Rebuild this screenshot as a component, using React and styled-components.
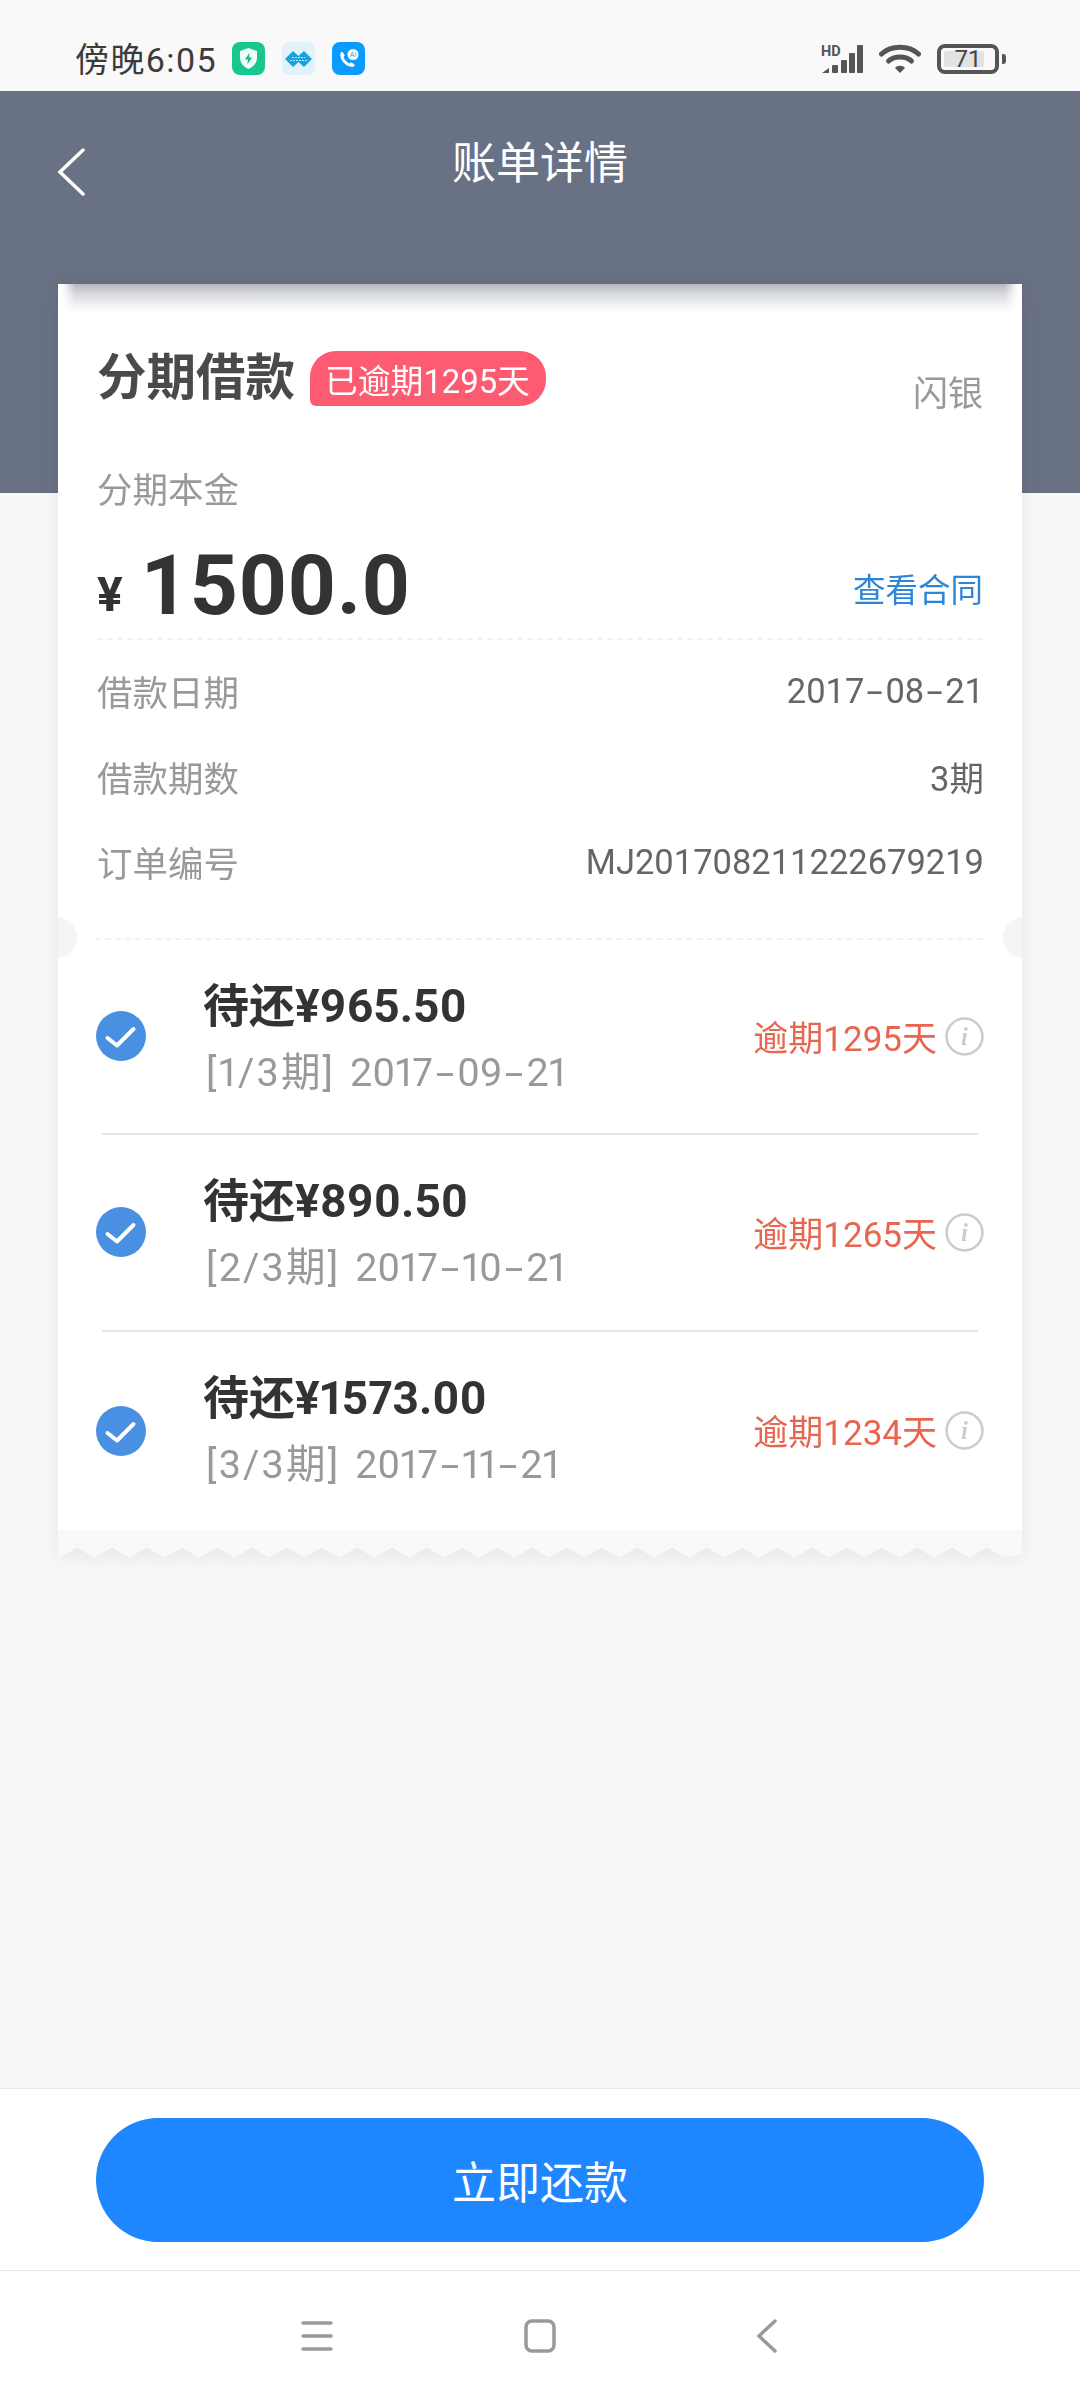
import React from "react"
import styled, { createGlobalStyle } from "styled-components"

const GlobalStyle = createGlobalStyle`
  html, body {
    margin: 0;
    padding: 0;
    background: #f8f8f8;
  }
  * {
    box-sizing: border-box;
  }
`

const Page = styled.div`
  width: 1080px;
  height: 2400px;
  display: flex;
  flex-direction: column;
  background: #f8f8f8;
  font-family: Roboto, "Noto Sans CJK SC", sans-serif;
  overflow: hidden;
`

// Status bar
const StatusBar = styled.div`
  height: 91px;
  flex: none;
  display: flex;
  align-items: center;
  padding: 26px 74px 0 75px;
  background: #f9f9f9;
`

const Clock = styled.span`
  font-size: 34px;
  line-height: 40px;
  letter-spacing: 1.4px;
  color: #3c3c3c;
  margin: 2px 15px 0 0;
`

const AppIcons = styled.div`
  display: flex;
  gap: 17px;
  flex: 1;
`

const StatusIcons = styled.div`
  display: flex;
  align-items: center;
  gap: 16px;
`

const BatteryBox = styled.div`
  position: relative;
  width: 62px;
  height: 30px;
  border: 4px solid #555;
  border-radius: 8px;
  display: flex;
  align-items: center;
  justify-content: center;
`

const BatteryFill = styled.div`
  position: absolute;
  left: 3px;
  top: 3px;
  bottom: 3px;
  border-radius: 2px;
  background: #e2e2e2;
`

const BatteryText = styled.span`
  position: relative;
  font-size: 24px;
  line-height: 22px;
  color: #444;
`

const BatteryCap = styled.div`
  width: 4px;
  height: 10px;
  margin-left: -13px;
  border-radius: 0 3px 3px 0;
  background: #555;
`

// Dark header
const Band = styled.header`
  height: 402px;
  flex: none;
  background: #697184;
  display: flex;
  align-items: flex-start;
  padding-top: 49px;
`

const BackButton = styled.div`
  width: 30px;
  height: 48px;
  margin: 8px 0 0 57px;
`

const HeaderTitle = styled.h1`
  margin: 0 0 0 -87px;
  flex: 1;
  font-size: 44px;
  line-height: 48px;
  font-weight: 400;
  text-align: center;
  color: #fff;
`

const Content = styled.main`
  flex: 1;
  padding: 0 58px;
  margin-top: -209px;
`

// Receipt card
const Card = styled.section`
  position: relative;
  filter: drop-shadow(0 4px 10px rgba(0, 0, 0, 0.07));
`

const Sheet = styled.div`
  background: #fff;
`

const TopShade = styled.div`
  position: absolute;
  left: 4px;
  right: 4px;
  top: 0;
  height: 30px;
  background: linear-gradient(to bottom, #b4b7c1 0%, #dadbe0 35%, #f5f5f6 75%, #fff 100%);
  mask-image: linear-gradient(to right, transparent 0, #000 14px, #000 calc(100% - 14px), transparent 100%);
`

const Summary = styled.div`
  padding: 64px 39px 0 39px;
`

const TitleRow = styled.div`
  display: flex;
  height: 60px;
  align-items: center;
`

const LoanTitle = styled.h2`
  margin: 0 15px 0 0;
  font-size: 49.5px;
  line-height: 60px;
  font-weight: 700;
  color: #4a4a4a;
`

const OverdueBadge = styled.span`
  height: 55px;
  padding: 0 16px 0 15px;
  display: flex;
  align-items: center;
  border-radius: 26px 26px 26px 6px;
  background: #fd5b72;
  font-size: 32.8px;
  color: #fff;
`

const Source = styled.span`
  margin-left: auto;
  margin-top: 33px;
  font-size: 35px;
  line-height: 46px;
  color: #999;
`

const PrincipalLabel = styled.div`
  margin-top: 58px;
  font-size: 35.5px;
  line-height: 50px;
  color: #999;
`

const AmountRow = styled.div`
  margin-top: 25px;
  height: 99px;
  padding-bottom: 9px;
  display: flex;
  align-items: center;
  border-bottom: 2px dashed #f1f1f1;
`

const Yen = styled.span`
  font-size: 48px;
  font-weight: 700;
  color: #333;
  margin: 18px 18px 0 0;
`

const Amount = styled.span`
  font-size: 84px;
  line-height: 90px;
  font-weight: 700;
  letter-spacing: 0.8px;
  color: #333;
  margin-top: 2px;
`

const ContractLink = styled.a`
  margin-left: auto;
  margin-top: 4px;
  font-size: 32.5px;
  color: #2e86d6;
`

const DetailList = styled.div`
  padding: 8px 38px 33px 39px;
`

const DetailRow = styled.div`
  height: 85.5px;
  display: flex;
  align-items: center;
  justify-content: space-between;
`

const DetailLabel = styled.span`
  font-size: 35.5px;
  color: #999;
`

const DetailValue = styled.span`
  font-size: 34.5px;
  color: #666;
`

// the hyphen in the dates is drawn wider than Roboto's
const Dash = styled.span`
  display: inline-block;
  width: 0.61em;
  text-align: center;
  transform: scaleX(1.7);
`

const DashedLine = styled.div`
  margin: 0 39px 0 37px;
  border-top: 2px dashed #f1f1f1;
`

const Notch = styled.div`
  position: absolute;
  top: 633px;
  width: 41px;
  height: 41px;
  border-radius: 50%;
  background: #f5f5f5;
  ${props =>
    props.$side === "left"
      ? "left: -22px; clip-path: inset(0 0 0 22px);"
      : "right: -22px; clip-path: inset(0 22px 0 0);"}
`

const Installment = styled.div`
  height: ${props => props.$height}px;
  display: flex;
  align-items: center;
  padding: 0 38px 0 38px;
`

const CheckBadge = styled.div`
  width: 50px;
  height: 50px;
  flex: none;
  margin-right: 57px;
`

const InstallmentText = styled.div`
  flex: 1;
  padding-top: ${props => props.$top}px;
`

const InstallmentTitle = styled.div`
  font-size: 46px;
  line-height: 67px;
  font-weight: 700;
  font-variant-numeric: proportional-nums;
  color: #333;
  position: relative;
  top: 1px;
`

const InstallmentDate = styled.div`
  font-size: 39.5px;
  line-height: 67px;
  word-spacing: 5px;
  font-variant-numeric: proportional-nums;
  color: #999;
  padding-left: 3px;
`

const Period = styled.span`
  letter-spacing: 2.2px;
`

const LateText = styled.span`
  font-size: 35px;
  color: #e8654f;
  margin: -2px 8px 0 0;
`

const InfoIcon = styled.div`
  width: 39px;
  height: 39px;
  flex: none;
`

const Divider = styled.div`
  height: 2px;
  margin: 0 44px;
  background: #e6e6e6;
`

const Tear = styled.svg`
  display: block;
  width: 964px;
  height: 28px;
`

// Footer
const ActionBar = styled.div`
  height: 182px;
  flex: none;
  padding: 29px 96px 0;
  background: #fff;
  border-top: 1px solid #e8e8e8;
`

const PayButton = styled.button`
  display: block;
  width: 100%;
  height: 124px;
  border: none;
  border-radius: 62px;
  background: #1e87ff;
  color: #fff;
  font-family: inherit;
  font-size: 44px;
`

const NavBar = styled.nav`
  height: 130px;
  flex: none;
  display: flex;
  justify-content: center;
  align-items: center;
  gap: 183px;
  background: #fff;
  border-top: 1px solid #e8e8e8;
`

const installments = [
  { title: "待还¥965.50", period: "[1/3期]", date: "2017-09-21", late: "逾期1295天", height: 193, top: 5 },
  { title: "待还¥890.50", period: "[2/3期]", date: "2017-10-21", late: "逾期1265天", height: 195, top: 3 },
  { title: "待还¥1573.00", period: "[3/3期]", date: "2017-11-21", late: "逾期1234天", height: 198, top: 0 },
]

const details = [
  ["借款日期", "2017-08-21"],
  ["借款期数", "3期"],
  ["订单编号", "MJ201708211222679219"],
]

function withDashes(text) {
  return text.split("-").map((part, i) => (
    <React.Fragment key={i}>
      {i > 0 && <Dash>-</Dash>}
      {part}
    </React.Fragment>
  ))
}

// zigzag edge at the bottom of the receipt, one tooth every 35px
function tearPath() {
  let d = "M0 0 L964 0 L964 24"
  for (let x = 954; x > 0; x -= 35) {
    d += ` L${x - 8} 27 L${x - 25} 17`
  }
  return d + " L0 22 Z"
}

function ShieldIcon() {
  return (
    <svg width="33" height="33" viewBox="0 0 33 33">
      <rect width="33" height="33" rx="8" fill="#17c78f" />
      <path d="M16.5 6 L25 9 V16 C25 21 21 25 16.5 27 C12 25 8 21 8 16 V9 Z" fill="#f2fdf9" />
      <path d="M17.5 10.5 L13 17.5 H16 L15.3 22.5 L20 15.5 H17 Z" fill="#17b784" />
    </svg>
  )
}

function DiamondIcon() {
  return (
    <svg width="33" height="33" viewBox="0 0 33 33">
      <rect width="33" height="33" rx="8" fill="#e1f2fa" />
      <path d="M3 17 L11 9 L16.5 14 L22 9 L30 17 L22 25 L16.5 20 L11 25 Z" fill="#16a3dc" />
      <path d="M10 15.5 H23 M8 18.5 H25" stroke="#bfe8f8" strokeWidth="1" strokeDasharray="2 1" />
    </svg>
  )
}

function CallIcon() {
  return (
    <svg width="33" height="33" viewBox="0 0 33 33">
      <rect width="33" height="33" rx="8" fill="#0a9bff" />
      <path
        d="M8.5 11 C9 10 10.5 9.5 11 10.5 L12.5 13 C12.8 13.8 12 14.5 11.5 15 C12.5 18 14.5 20 17.5 21.5 C18 21 18.8 20.2 19.6 20.5 L22 22 C23 22.8 22.5 24 21.5 24.8 C15 26 7 18 8.5 11 Z"
        fill="#fff"
      />
      <circle cx="21" cy="12.5" r="5.5" fill="#fff" />
      <text x="21" y="15" textAnchor="middle" fontSize="7" fontFamily="Roboto, sans-serif" fill="#0a9bff">
        AI
      </text>
    </svg>
  )
}

function SignalIcon() {
  return (
    <svg width="42" height="30" viewBox="0 0 42 30">
      <text x="0" y="12" fontSize="14.5" fontWeight="700" fontFamily="Roboto, sans-serif" fill="#555">
        HD
      </text>
      <path d="M1 29 L8 24 V29 Z" fill="#555" />
      <rect x="11" y="21" width="6" height="8" rx="1" fill="#555" />
      <rect x="20" y="16" width="6" height="13" rx="1" fill="#555" />
      <rect x="28" y="9" width="6" height="20" rx="1" fill="#555" />
      <rect x="36" y="1" width="6" height="28" rx="1" fill="#555" />
    </svg>
  )
}

function WifiIcon() {
  return (
    <svg width="42" height="30" viewBox="0 0 42 30" fill="none" stroke="#555" strokeWidth="5" strokeLinecap="round">
      <path d="M2.5 10 C12 1 30 1 39.5 10" />
      <path d="M9.5 17 C15 11.5 27 11.5 32.5 17" />
      <path d="M16 24 L21 29 L26 24 C24 21 18 21 16 24 Z" fill="#555" stroke="none" />
    </svg>
  )
}

function BackChevron() {
  return (
    <svg width="30" height="48" viewBox="0 0 30 48" fill="none" stroke="#fff" strokeWidth="3.5" strokeLinecap="round">
      <path d="M26 2 L3 24 L26 46" />
    </svg>
  )
}

function CheckIcon() {
  return (
    <svg width="50" height="50" viewBox="0 0 50 50">
      <circle cx="25" cy="25" r="25" fill="#4a90e2" />
      <path d="M11.5 27 L21 34.5 L37.5 18" fill="none" stroke="#fff" strokeWidth="4" strokeLinecap="round" strokeLinejoin="round" />
    </svg>
  )
}

function InfoGlyph() {
  return (
    <svg width="39" height="39" viewBox="0 0 38 38">
      <circle cx="19" cy="19" r="17.5" fill="none" stroke="#ccc" strokeWidth="2.5" />
      <text x="19" y="27" textAnchor="middle" fontSize="24" fontStyle="italic" fontWeight="700" fontFamily="Liberation Serif, serif" fill="#ccc">
        i
      </text>
    </svg>
  )
}

function App() {
  return (
    <Page>
      <GlobalStyle />
      <StatusBar>
        <Clock>傍晚6:05</Clock>
        <AppIcons>
          <ShieldIcon />
          <DiamondIcon />
          <CallIcon />
        </AppIcons>
        <StatusIcons>
          <SignalIcon />
          <WifiIcon />
          <BatteryBox>
            <BatteryFill style={{ width: `${71 * 0.56}px` }} />
            <BatteryText>71</BatteryText>
          </BatteryBox>
          <BatteryCap />
        </StatusIcons>
      </StatusBar>

      <Band>
        <BackButton>
          <BackChevron />
        </BackButton>
        <HeaderTitle>账单详情</HeaderTitle>
      </Band>

      <Content>
        <Card>
          <Sheet>
            <Summary>
              <TitleRow>
                <LoanTitle>分期借款</LoanTitle>
                <OverdueBadge>已逾期1295天</OverdueBadge>
                <Source>闪银</Source>
              </TitleRow>
              <PrincipalLabel>分期本金</PrincipalLabel>
              <AmountRow>
                <Yen>¥</Yen>
                <Amount>1500.0</Amount>
                <ContractLink>查看合同</ContractLink>
              </AmountRow>
            </Summary>
            <DetailList>
              {details.map(([label, value]) => (
                <DetailRow key={label}>
                  <DetailLabel>{label}</DetailLabel>
                  <DetailValue>{withDashes(value)}</DetailValue>
                </DetailRow>
              ))}
            </DetailList>
            <DashedLine />
            {installments.map((item, i) => (
              <React.Fragment key={item.date}>
                {i > 0 && <Divider />}
                <Installment $height={item.height}>
                  <CheckBadge>
                    <CheckIcon />
                  </CheckBadge>
                  <InstallmentText $top={item.top}>
                    <InstallmentTitle>{item.title}</InstallmentTitle>
                    <InstallmentDate>
                      <Period>{item.period}</Period> {withDashes(item.date)}
                    </InstallmentDate>
                  </InstallmentText>
                  <LateText>{item.late}</LateText>
                  <InfoIcon>
                    <InfoGlyph />
                  </InfoIcon>
                </Installment>
              </React.Fragment>
            ))}
          </Sheet>
          <Tear viewBox="0 0 964 28">
            <path d={tearPath()} fill="#f9f9f9" stroke="#f9f9f9" strokeWidth="1" strokeLinejoin="round" />
          </Tear>
          <TopShade />
          <Notch $side="left" />
          <Notch $side="right" />
        </Card>
      </Content>

      <ActionBar>
        <PayButton>立即还款</PayButton>
      </ActionBar>
      <NavBar>
        <svg width="40" height="40" viewBox="0 0 40 40" stroke="#999" strokeWidth="3.5" strokeLinecap="round">
          <path d="M6 7 H34 M6 20 H34 M6 33 H34" />
        </svg>
        <svg width="40" height="40" viewBox="0 0 40 40" fill="none" stroke="#999" strokeWidth="3.5">
          <rect x="6" y="5" width="28" height="30" rx="6" />
        </svg>
        <svg width="40" height="40" viewBox="0 0 40 40" fill="none" stroke="#999" strokeWidth="3.5" strokeLinecap="round">
          <path d="M32 5 L16 20 L32 35" />
        </svg>
      </NavBar>
    </Page>
  )
}

export default App
